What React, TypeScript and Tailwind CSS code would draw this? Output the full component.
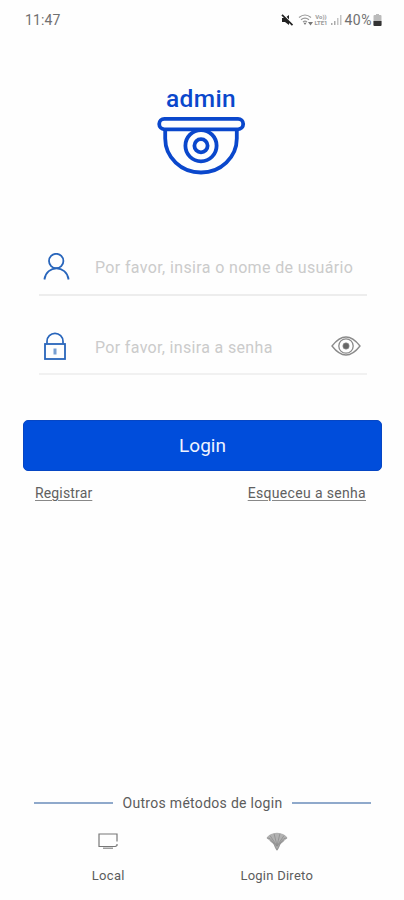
import React from 'react';

function StatusBar() {
  return (
    <header className="flex h-10 items-center justify-between pl-[25px] pr-[22px] text-[14px] text-[#707070]">
      <span className="leading-5 tracking-[0.1px]">11:47</span>
      <div className="flex items-center">
        <svg width="13" height="12" viewBox="0 0 13 12" className="mr-1">
          <path d="M1 4h3l4-3v10L4 8H1z" fill="#222" />
          <path d="M2.5 0.5l9 10" stroke="#fff" strokeWidth="1.6" />
          <path d="M1 0.8l10.5 10.4" stroke="#222" strokeWidth="1.7" />
        </svg>
        <svg width="16" height="12" viewBox="0 0 16 12" fill="none">
          <path d="M1 3.5Q7 -1.5 13 3.5M3 5.7Q7 2.4 11 5.7M5 8Q7 6.2 9 8" stroke="#999" strokeWidth="1.2" />
          <path d="M7 11L5.5 8.8h3zM10 8h5l-2.5 3.5z" fill="#777" />
        </svg>
        <div className="flex w-[15px] flex-col items-center text-[6px] font-bold leading-[6px] text-[#999]">
          <span>Vo))</span>
          <span>LTE1</span>
        </div>
        <svg width="12" height="12" viewBox="0 0 12 12" className="ml-px mr-[3px]">
          <path d="M1 9h1.5v2H1zM4 7h1.5v4H4z" fill="#aaa" />
          <path d="M7 4h1.5v7H7zM10 1h1.5v10H10z" fill="#c4c4c4" />
        </svg>
        <span className="leading-5 tracking-[0.5px]">40%</span>
        <svg width="9" height="12" viewBox="0 0 9 12" className="ml-px">
          <path d="M3 0h3v1h1.5q1 0 1 1v9q0 1-1 1h-6q-1 0-1-1V2q0-1 1-1H3z" fill="#bbb" />
          <path d="M.5 7h8V11q0 1-1 1h-6q-1 0-1-1z" fill="#333" />
        </svg>
      </div>
    </header>
  );
}

function Logo() {
  return (
    <div className="mt-[45px] flex flex-col items-center pr-[2px] text-[#0a47cc]">
      <h1 className="h-[29px] text-[24.5px] font-medium leading-[28px] tracking-[0.35px]">admin</h1>
      <svg width="90" height="62" viewBox="0 0 90 62" fill="none" stroke="currentColor" strokeWidth="3.8" className="mt-px">
        <rect x="3.2" y="3.9" width="84" height="10.4" rx="5.2" />
        <path d="M9.2 14v9.5a35.8 34 0 0 0 71.6 0V14" />
        <circle cx="45" cy="30.7" r="15.6" />
        <circle cx="45" cy="30.7" r="6.6" />
      </svg>
    </div>
  );
}

function UserIcon() {
  return (
    <svg width="28" height="28" viewBox="0 0 28 28" fill="none" stroke="#2865bb" strokeWidth="1.8">
      <circle cx="14.2" cy="8" r="7.2" />
      <path d="M2.4 26.5C4.5 11.7 24.5 11.7 26.6 26.5" />
    </svg>
  );
}

function LockIcon() {
  return (
    <svg width="24" height="28" viewBox="0 0 24 28" fill="none" stroke="#2865bb" strokeWidth="1.8">
      <rect x="2" y="12" width="20" height="15" />
      <path d="M4 11.5V9.3a8 8 0 0 1 16 0v2.2" strokeWidth="1.7" />
      <path d="M12 16.5v6" stroke="#779fd2" strokeWidth="3" />
    </svg>
  );
}

function EyeIcon() {
  return (
    <svg width="30" height="20" viewBox="0 0 30 20" fill="none" stroke="#8a8a8a" strokeWidth="1.3">
      <path d="M1 10Q8 1 15 1t14 9q-7 9-14 9T1 10z" />
      <circle cx="15" cy="10" r="7.2" />
      <circle cx="15" cy="10" r="3.2" fill="#666" stroke="#999" strokeWidth=".6" />
    </svg>
  );
}

function FanIcon() {
  return (
    <svg width="22" height="20" viewBox="0 0 22 20">
      <path d="M.5 6Q3 2 7 1.5Q11 0 15 1.5Q19 2 21.5 6L18.5 8.5L14.5 12Q13 17 11 19Q9 17 7.5 12L3.5 8.5z" fill="#b2b2b2" />
      <path d="M1 6l3 .5 7 8M4 3.5l7 10.5M8 1.5l3 12M14 1.5l-3 12M18 3.5L11 14M21 6l-3 .5-7 8M4 8.5l4 3.5 3 6 3-6 4-3.5" fill="none" stroke="#888" strokeWidth=".7" />
    </svg>
  );
}

export default function App() {
  return (
    <div className="flex h-[900px] w-[404px] flex-col overflow-hidden bg-[#fefefe] font-['Roboto',sans-serif]">
      <StatusBar />
      <Logo />
      <form className="flex flex-col" onSubmit={(e) => e.preventDefault()}>
        <div className="ml-[39px] mt-[63px] flex h-[56px] w-[328px] items-center border-b-2 border-[#ededed] pl-[3px]">
          <div className="w-[53px]"><UserIcon /></div>
          <span className="whitespace-nowrap pt-px text-[16px] leading-5 tracking-[0.36px] text-[#cbcbcb]">Por favor, insira o nome de usuário</span>
        </div>
        <div className="ml-[39px] mt-[23px] flex h-[56px] w-[328px] items-center border-b-2 border-[#f1f1f1] pl-[4px]">
          <div className="w-[52px]"><LockIcon /></div>
          <span className="whitespace-nowrap pt-[3px] text-[16px] leading-5 tracking-[0.33px] text-[#cbcbcb]">Por favor, insira a senha</span>
          <button type="button" aria-label="Mostrar senha" className="ml-auto mr-[6px]"><EyeIcon /></button>
        </div>
        <button type="submit" className="ml-[23px] mt-[45px] h-[51px] w-[359px] rounded-[5px] border border-[#0646c4] bg-[#004ddb] pt-[2px] text-[19px] text-[#eef3ff]">Login</button>
      </form>
      <div className="mt-[12px] flex justify-between pl-[35px] pr-[38px] text-[14px] leading-5 text-[#606060]">
        <a className="tracking-[0.15px] underline decoration-[#888] underline-offset-2">Registrar</a>
        <a className="tracking-[0.33px] underline decoration-[#888] underline-offset-2">Esqueceu a senha</a>
      </div>
      <footer className="mt-auto h-[107px] text-[#5c5c5c]">
        <div className="flex items-center pl-[34px] pr-[33px]">
          <div className="h-[2px] w-[79px] bg-[#8fa9cb]" />
          <span className="flex-1 whitespace-nowrap text-center text-[14px] leading-5 tracking-[0.3px]">Outros métodos de login</span>
          <div className="h-[2px] w-[79px] bg-[#8fa9cb]" />
        </div>
        <div className="mt-[19px] flex pl-[24px] pr-[43px] text-[13px] leading-5">
          <div className="flex flex-1 flex-col items-center">
            <svg width="20" height="20" viewBox="0 0 20 20" fill="none" stroke="#777" strokeWidth="1.2">
              <path d="M17.5 14.5H1V2h18v7.5M19 12v1.5l-1.5 1" />
              <path d="M5 16.2h10" stroke="#888" />
            </svg>
            <span className="mt-[14px] tracking-[0.3px]">Local</span>
          </div>
          <div className="flex flex-1 flex-col items-center">
            <FanIcon />
            <span className="mt-[14px] tracking-[0.25px]">Login Direto</span>
          </div>
        </div>
      </footer>
    </div>
  );
}
